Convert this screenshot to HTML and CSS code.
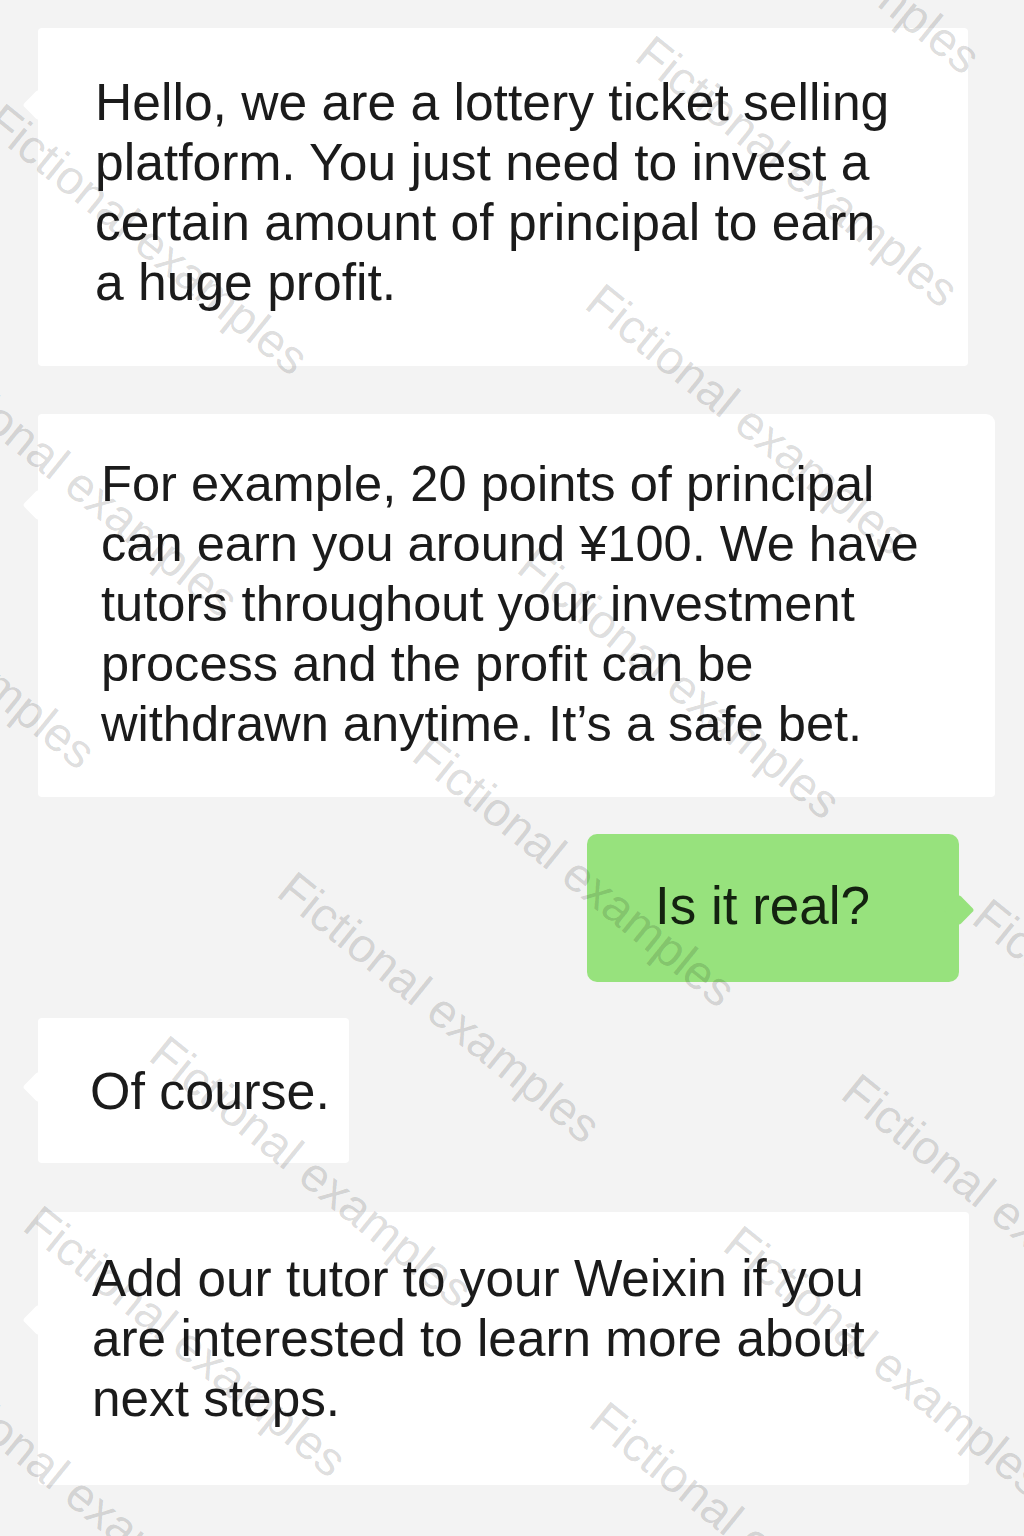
FILE: index.html
```html
<!DOCTYPE html>
<html lang="en">
<head>
<meta charset="utf-8">
<title>Chat</title>
<link rel="stylesheet" href="styles.css">
</head>
<body>
<div class="page">
  <div class="chat">
    <div class="bubble in b1">Hello, we are a lottery ticket selling<br>platform. You just need to invest a<br>certain amount of principal to earn<br>a huge profit.</div>
    <div class="bubble in b2">For example, 20 points of principal<br>can earn you around ¥100. We have<br>tutors throughout your investment<br>process and the profit can be<br>withdrawn anytime. It’s a safe bet.</div>
    <div class="bubble out b3">Is it real?</div>
    <div class="bubble in b4">Of course.</div>
    <div class="bubble in b5">Add our tutor to your Weixin if you<br>are interested to learn more about<br>next steps.</div>
  </div>
  <div class="watermarks" aria-hidden="true">
    <span class="wm w1">Fictional examples</span>
    <span class="wm w2">Fictional examples</span>
    <span class="wm w3">Fictional examples</span>
    <span class="wm w4">Fictional examples</span>
    <span class="wm w5">Fictional examples</span>
    <span class="wm w6">Fictional examples</span>
    <span class="wm w7">Fictional examples</span>
    <span class="wm w8">Fictional examples</span>
    <span class="wm w9">Fictional examples</span>
    <span class="wm w10">Fictional examples</span>
    <span class="wm w11">Fictional examples</span>
    <span class="wm w12">Fictional examples</span>
    <span class="wm w13">Fictional examples</span>
    <span class="wm w14">Fictional examples</span>
    <span class="wm w15">Fictional examples</span>
    <span class="wm w16">Fictional examples</span>
  </div>
</div>
</body>
</html>
```
FILE: styles.css
```css
html, body {
  margin: 0;
  padding: 0;
  background: #f3f3f3;
}

.page {
  position: relative;
  width: 1024px;
  height: 1536px;
  overflow: hidden;
  font-family: "Liberation Sans", Arial, sans-serif;
  color: #1b1b1b;
}

.chat {
  display: flex;
  flex-direction: column;
  align-items: flex-start;
  padding: 28px 0 0 38px;
}

.bubble {
  position: relative;
  box-sizing: border-box;
  font-size: 52px;
  line-height: 60px;
  background: #ffffff;
  border-radius: 4px;
}

.bubble::before {
  content: "";
  position: absolute;
  top: var(--tail-y, 60px);
  width: 22px;
  height: 22px;
  border-radius: 3px;
  transform: rotate(45deg);
  background: inherit;
}

.in::before {
  left: -11px;
}

.out::before {
  right: -11px;
}

.b1 {
  --tail-y: 66px;
  width: 930px;
  padding: 44px 20px 54px 57px;
  font-size: 51.6px;
}

.b2 {
  --tail-y: 80px;
  width: 957px;
  margin-top: 48px;
  padding: 40px 20px 43px 63px;
  font-size: 50.6px;
  border-radius: 4px 9px 4px 4px;
}

.b3 {
  --tail-y: 65px;
  align-self: flex-end;
  margin-right: 65px;
  margin-top: 37px;
  width: 372px;
  padding: 42px 10px 46px 68px;
  font-size: 53px;
  background: #97e27d;
  color: #142210;
  border-radius: 10px;
}

.b4 {
  --tail-y: 58px;
  width: 311px;
  margin-top: 36px;
  padding: 43px 10px 42px 52px;
}

.b5 {
  --tail-y: 97px;
  width: 931px;
  margin-top: 49px;
  padding: 37px 20px 56px 54px;
  font-size: 51.3px;
}

.watermarks {
  position: absolute;
  inset: 0;
  pointer-events: none;
}

.wm {
  position: absolute;
  white-space: nowrap;
  font-size: 48px;
  line-height: 48px;
  color: rgba(0, 0, 0, 0.15);
  transform-origin: 0 0;
  transform: rotate(39deg);
}

.w1 { left: 8px; top: 96px; }
.w2 { left: 658px; top: 28px; }
.w3 { left: 608px; top: 276px; }
.w4 { left: 680px; top: -205px; }
.w5 { left: -62px; top: 338px; }
.w6 { left: -205px; top: 490px; }
.w7 { left: 435px; top: 728px; }
.w8 { left: 300px; top: 864px; }
.w9 { left: 864px; top: 1066px; }
.w10 { left: 995px; top: 891px; }
.w11 { left: 172px; top: 1028px; }
.w12 { left: 46px; top: 1198px; }
.w13 { left: 746px; top: 1218px; }
.w14 { left: 612px; top: 1394px; }
.w15 { left: -62px; top: 1348px; }
.w16 { left: 540px; top: 540px; }
```
